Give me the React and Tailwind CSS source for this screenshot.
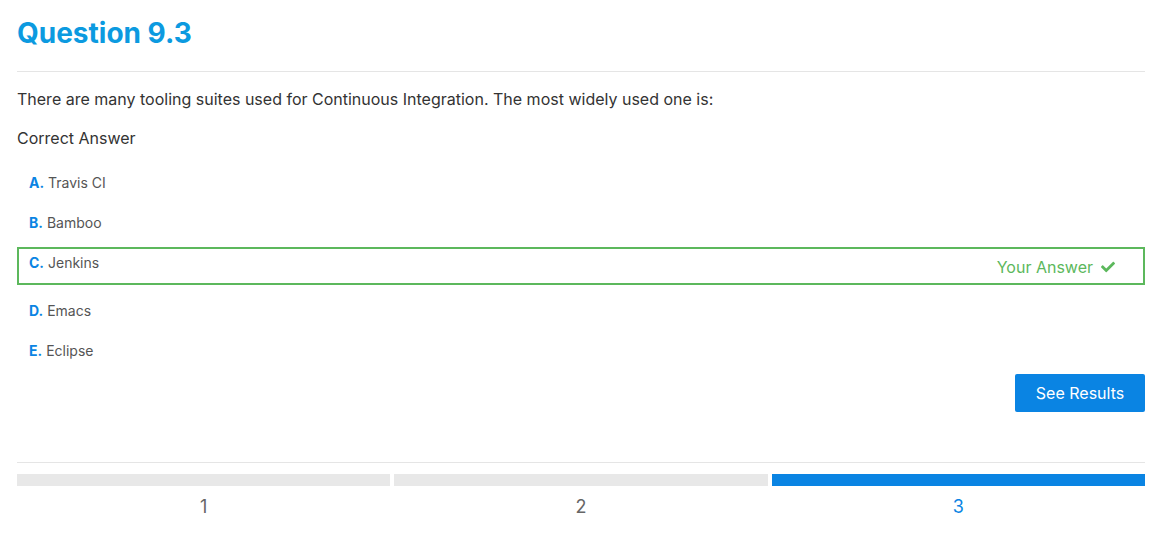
import React from "react";
import { FaCheck } from "react-icons/fa";

const options = [
  { letter: "A", text: "Travis CI" },
  { letter: "B", text: "Bamboo" },
  { letter: "C", text: "Jenkins", picked: true },
  { letter: "D", text: "Emacs" },
  { letter: "E", text: "Eclipse" },
];

const steps = [1, 2, 3];
const current = 3;

export default function App() {
  return (
    <div className="min-h-screen bg-white px-[17px] pt-4 font-['Inter',sans-serif] text-[#333]">
      <h1 className="text-[28px] font-bold leading-[34px] text-[#0c9ae0]">Question 9.3</h1>
      <div className="mt-[21px] border-t border-[#e5e5e5]" />

      <p className="mt-[15px] text-base leading-6">
        There are many tooling suites used for Continuous Integration. The most widely used one is:
      </p>
      <p className="mt-[15px] text-base leading-6">Correct Answer</p>

      {/* answers */}
      <div className="mt-[17px] flex flex-col">
        {options.map((o) => (
          <div
            key={o.letter}
            className={
              "flex items-start justify-between border-2 pl-[10px] pr-[28px] pt-1 pb-[10px] " +
              (o.picked ? "border-[#5cb85c] mb-[10px]" : "border-transparent mb-[2px]")
            }
          >
            <span className="text-sm leading-5 text-[#555]">
              <span className="font-bold text-[#0a84e3]">{o.letter}.</span> {o.text}
            </span>
            {o.picked && (
              <span className="flex translate-y-1 items-center gap-2 text-base leading-5 text-[#5cb85c]">
                Your Answer <FaCheck className="h-[14px] w-[14px]" />
              </span>
            )}
          </div>
        ))}
      </div>

      <div className="flex justify-end">
        <button className="-mt-px h-[38px] w-[130px] rounded-[2px] bg-[#0a84e3] text-base text-white">
          See Results
        </button>
      </div>

      <div className="mt-[50px] border-t border-[#e5e5e5]" />

      {/* progress */}
      <div className="mt-[11px] grid grid-cols-3 gap-1">
        {steps.map((s) => (
          <div key={s} className="flex flex-col items-center">
            <div className={"h-3 w-full " + (s === current ? "bg-[#0a84e3]" : "bg-[#e8e8e8]")} />
            <span
              className={
                "mt-[9px] text-lg leading-6 " + (s === current ? "text-[#0a84e3]" : "text-[#666]")
              }
            >
              {s}
            </span>
          </div>
        ))}
      </div>
    </div>
  );
}
